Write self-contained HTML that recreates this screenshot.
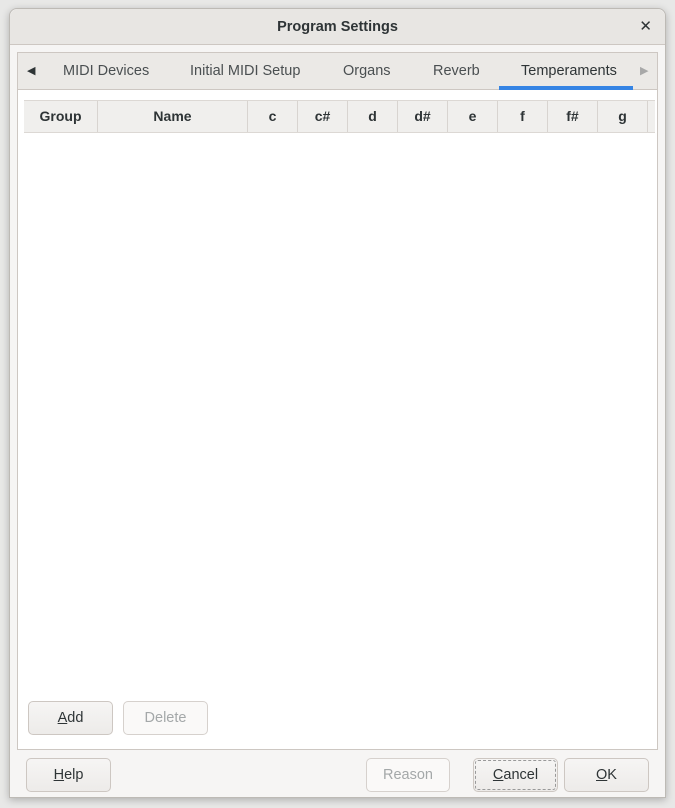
<!DOCTYPE html>
<html><head><style>
*{box-sizing:border-box}
body{margin:0;width:675px;height:808px;background:#e8e8e7;font-family:"Liberation Sans","DejaVu Sans",sans-serif;position:relative;overflow:hidden;color:#2e3436}
.win{position:absolute;left:9px;top:8px;width:657px;height:790px;background:#f6f5f4;border:1px solid #bdbab5;border-radius:8px 8px 0 0;box-shadow:0 2px 8px rgba(0,0,0,.25)}
.title{position:absolute;left:0;top:0;width:100%;height:36px;background:#e8e6e3;border-bottom:1px solid #cdc7c2;border-radius:8px 8px 0 0;text-align:center;font-weight:bold;font-size:14.5px;line-height:36px;color:#2e3436}
.x{position:absolute;right:13px;top:0;font-size:15px;font-weight:bold}
.nb{position:absolute;left:17px;top:52px;width:641px;height:698px;border:1px solid #cdc7c2;background:#fff}
.tabs{position:absolute;left:0;top:0;width:100%;height:37px;background:#ebe9e6;border-bottom:1px solid #cdc7c2;font-size:14.5px;color:#4a4f51}
.tabs span{position:absolute;top:10px}
.ul{position:absolute;left:481px;top:33px;width:134px;height:4px;background:#3584e4}
.hdr{position:absolute;left:24px;top:100px;width:631px;height:33px;background:#f0efed;border-top:1px solid #dcd8d4;border-bottom:1px solid #dcd8d4}
.hdr div{position:absolute;top:0;height:31px;line-height:31px;text-align:center;font-weight:bold;font-size:14px;border-right:1px solid #d8d4d0;color:#2e3436}
.btn{position:absolute;height:34px;border:1px solid #cdc7c2;border-radius:5px;background:linear-gradient(#f6f5f4,#edebe9);font-size:14.5px;text-align:center;line-height:32px;color:#2e3436}
.dis{color:#a4a8a9;background:#faf9f8;border-color:#d6d1cd}
u{text-decoration:underline}
</style></head><body>
<div class="win">
<div class="title">Program Settings<span class="x">✕</span></div>
</div>
<div class="nb">
<div class="tabs">
<span style="left:9px;font-size:11px;top:11px;color:#2e3436">◀</span>
<span style="left:45px">MIDI Devices</span>
<span style="left:172px">Initial MIDI Setup</span>
<span style="left:325px">Organs</span>
<span style="left:415px">Reverb</span>
<span style="left:503px;color:#2e3436">Temperaments</span>
<span style="left:622px;font-size:11px;top:11px;color:#a8a8a8">▶</span>
<div class="ul"></div>
</div>
</div>
<div class="hdr">
<div style="left:0;width:74px">Group</div>
<div style="left:74px;width:150px">Name</div>
<div style="left:224px;width:50px">c</div>
<div style="left:274px;width:50px">c#</div>
<div style="left:324px;width:50px">d</div>
<div style="left:374px;width:50px">d#</div>
<div style="left:424px;width:50px">e</div>
<div style="left:474px;width:50px">f</div>
<div style="left:524px;width:50px">f#</div>
<div style="left:574px;width:50px">g</div>
</div>
<div class="btn" style="left:28px;top:701px;width:85px"><u>A</u>dd</div>
<div class="btn dis" style="left:123px;top:701px;width:85px">Delete</div>
<div class="btn" style="left:26px;top:758px;width:85px"><u>H</u>elp</div>
<div class="btn dis" style="left:366px;top:758px;width:84px">Reason</div>
<div class="btn" style="left:473px;top:758px;width:85px;outline:1px dashed #999;outline-offset:-3px"><u>C</u>ancel</div>
<div class="btn" style="left:564px;top:758px;width:85px"><u>O</u>K</div>
</body></html>
